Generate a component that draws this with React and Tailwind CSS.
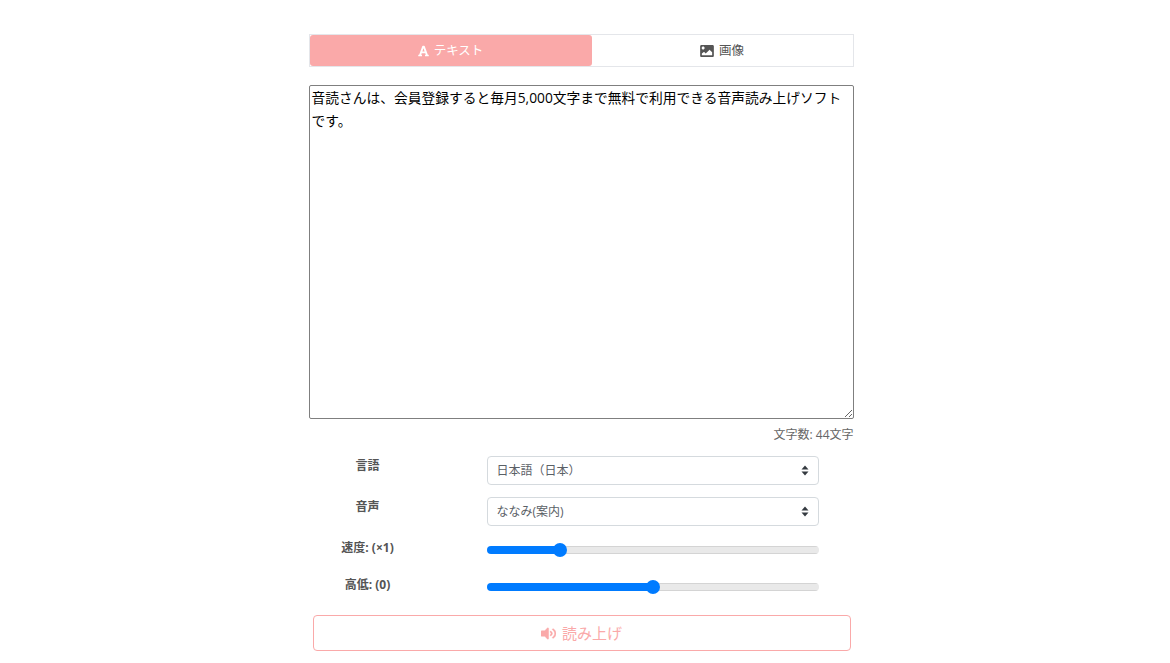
const FONT = "font-['Open_Sans','Noto_Sans_CJK_JP',sans-serif]";

function ImageIcon() {
  return (
    <svg width="14" height="12" viewBox="0 0 512 448" fill="currentColor" aria-hidden="true">
      <path d="M464 448H48c-26.500 0-48-21.500-48-48V48C0 21.500 21.500 0 48 0h416c26.500 0 48 21.500 48 48v352c0 26.500-21.500 48-48 48zM112 56c-30.900 0-56 25.100-56 56s25.100 56 56 56 56-25.100 56-56-25.100-56-56-56zM64 384h384V272l-87.500-87.500c-4.700-4.700-12.300-4.700-17 0L208 320l-55.500-55.500c-4.700-4.700-12.300-4.700-17 0L64 320v64z" />
    </svg>
  );
}

function FontIcon() {
  return (
    <svg width="11" height="12" viewBox="0 0 448 512" fill="currentColor" aria-hidden="true">
      <path d="M432 416h-23.400L277.900 53.200C273.400 40.500 261.400 32 248 32h-48c-13.400 0-25.400 8.500-29.900 21.200L39.400 416H16c-8.800 0-16 7.200-16 16v32c0 8.800 7.200 16 16 16h128c8.800 0 16-7.200 16-16v-32c0-8.800-7.200-16-16-16h-19.600l23.300-64h152.600l23.300 64H304c-8.800 0-16 7.200-16 16v32c0 8.800 7.200 16 16 16h128c8.800 0 16-7.200 16-16v-32c0-8.800-7.200-16-16-16zM176.900 272L224 142.500 271.100 272H176.900z" />
    </svg>
  );
}

function VolumeIcon() {
  return (
    <svg width="15" height="13" viewBox="0 64 504 384" fill="currentColor" stroke="currentColor" strokeWidth="14" aria-hidden="true">
      <path d="M215 71L126.100 160H24c-13.300 0-24 10.700-24 24v144c0 13.300 10.700 24 24 24h102.100L215 441c15 15 41 4.500 41-17V88c0-21.500-26-32-41-17z" />
      <path d="M338.200 179.100c-11.600-6.300-26.200-2.200-32.600 9.500-6.400 11.600-2.100 26.200 9.500 32.600C328 228.300 336 241.600 336 256c0 14.400-8 27.700-20.900 34.800-11.600 6.400-15.800 21-9.500 32.600 6.400 11.700 21 15.800 32.600 9.500 28.200-15.500 45.800-45 45.800-76.900s-17.600-61.400-45.800-76.900z" />
      <path d="M418.700 99.900c-11.200-7.300-26.200-4.200-33.500 7-7.300 11.100-4.200 26.100 7 33.400C431.800 166.200 456 209.400 456 256s-24.200 89.800-63.800 115.700c-11.200 7.300-14.300 22.300-7 33.400 7 10.700 21.900 14.600 33.500 7C471.700 377.400 504 319 504 256s-32.300-121.400-85.300-156.100z" />
    </svg>
  );
}

function SelectRow({ label, value, options, rowClass }) {
  return (
    <div className={`flex items-start ${rowClass}`}>
      <label className="w-[178px] pr-[60px] pt-[1px] text-center text-[12px] leading-[18px] font-bold text-[#555]">{label}</label>
      <div className="relative w-[332px] h-[29px]">
        <select defaultValue={value} className="block w-full h-full appearance-none bg-white border border-[#d5dade] rounded-[4px] pl-[9px] pr-6 text-[12px] text-[#5a6066] outline-none">
          {options.map((o) => <option key={o}>{o}</option>)}
        </select>
        <svg className="absolute right-[10px] top-[9px] pointer-events-none" width="8" height="11" viewBox="0 0 8 11" fill="#343a40" aria-hidden="true">
          <path d="M4 0.500L7.500 4.500H0.500Z" />
          <path d="M4 10.500L0.500 6.500H7.500Z" />
        </svg>
      </div>
    </div>
  );
}

function SliderRow({ label, value, min, max, track }) {
  return (
    <div className="flex items-start h-[37px]">
      <label className="w-[178px] pr-[60px] mt-[-2px] text-center text-[12px] leading-[18px] font-bold text-[#555]">{label}</label>
      <input
        type="range"
        min={min}
        max={max}
        step="any"
        defaultValue={value}
        style={{
          background: `linear-gradient(#007bff, #007bff) left / ${track}% 100% no-repeat, linear-gradient(#d4d4d4 1px, #e9e9e9 1px, #e9e9e9 7px, #d4d4d4 7px)`,
        }}
        className="block w-[332px] h-[8px] mt-[5px] appearance-none rounded-full outline-none [&::-webkit-slider-thumb]:appearance-none [&::-webkit-slider-thumb]:w-[14px] [&::-webkit-slider-thumb]:h-[14px] [&::-webkit-slider-thumb]:rounded-full [&::-webkit-slider-thumb]:bg-[#007bff]"
      />
    </div>
  );
}

export default function App() {
  return (
    <div className={`w-[1162px] h-[663px] overflow-hidden bg-white ${FONT}`}>
      <div className="w-[545px] mx-auto pt-[34px]">
        <div className="flex h-[33px] border border-[#e4e6ea] text-[12.500px]">
          <button className="w-[282px] flex items-center justify-center gap-[5px] bg-[#faa9a9] text-white rounded-[3px]">
            <FontIcon />
            <span className="mt-[1px]">テキスト</span>
          </button>
          <button className="flex-1 flex items-center justify-center gap-[5px] bg-white text-[#555]">
            <ImageIcon />
            <span className="mt-[1px]">画像</span>
          </button>
        </div>

        <textarea
          defaultValue="音読さんは、会員登録すると毎月5,000文字まで無料で利用できる音声読み上げソフトです。"
          className="block w-full h-[334px] mt-[18px] px-[2px] py-0 border border-[#7f7f7f] rounded-[2px] text-[13.750px] leading-[23px] text-black outline-none"
        />

        <p className="mt-[7px] h-[23px] text-right text-[12px] leading-[18px] text-[#666]">文字数: 44文字</p>

        <div className="pt-[7px]">
          <SelectRow label="言語" value="日本語（日本）" options={["日本語（日本）"]} rowClass="h-[41px]" />
          <SelectRow label="音声" value="ななみ(案内)" options={["ななみ(案内)"]} rowClass="h-[44px]" />
          <SliderRow label="速度: (×1)" value={1} min={0.25} max={3.81} track={22} />
          <SliderRow label="高低: (0)" value={0} min={-20} max={20} track={50} />
        </div>

        <button className="flex items-center justify-center gap-[6px] w-[538px] h-[36px] mx-[4px] border border-[#faa9a9] rounded-[4px] bg-white text-[#faa9a9] text-[15px]">
          <VolumeIcon />
          <span>読み上げ</span>
        </button>
      </div>
    </div>
  );
}
